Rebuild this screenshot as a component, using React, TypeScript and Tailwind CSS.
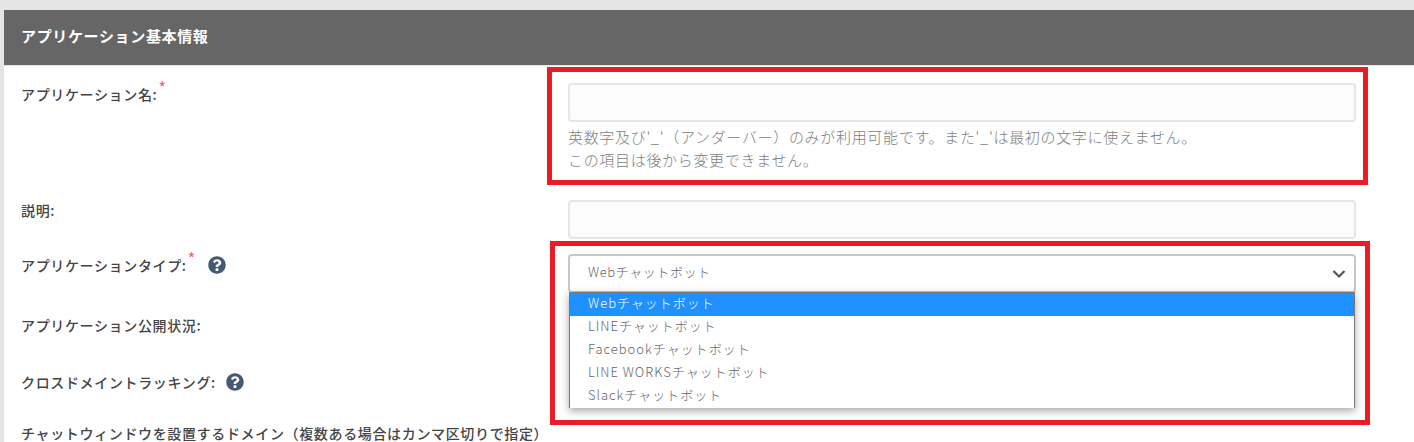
import React from "react";

const font = { fontFamily: '"Noto Sans CJK JP", "Noto Sans", sans-serif' };

function Help() {
  return (
    <svg viewBox="0 0 512 512" className="w-[18px] h-[18px] shrink-0" fill="#455a70">
      <path d="M504 256c0 137-111 248-248 248S8 393 8 256 119 8 256 8s248 111 248 248zM262.650 90c-54.497 0-89.255 22.957-116.549 63.758-3.536 5.286-2.353 12.415 2.715 16.258l34.699 26.310c5.205 3.947 12.621 3.008 16.665-2.122 17.864-22.658 30.113-35.797 57.303-35.797 20.429 0 45.698 13.148 45.698 32.958 0 14.976-12.363 22.667-32.534 33.976C247.128 238.528 216 254.941 216 296v4c0 6.627 5.373 12 12 12h56c6.627 0 12-5.373 12-12v-1.333c0-28.462 83.186-29.647 83.186-106.667 0-58.002-60.165-102-116.536-102zM256 338c-25.365 0-46 20.635-46 46 0 25.364 20.635 46 46 46s46-20.636 46-46c0-25.365-20.635-46-46-46z" />
    </svg>
  );
}

function Label({ children, star, className = "" }: { children: React.ReactNode; star?: boolean; className?: string }) {
  return (
    <div className={`flex items-start text-[14px] leading-5 font-medium text-[#444] tracking-[0.65px] ${className}`}>
      <span>{children}</span>
      {star && <span className="text-[#e8606a] text-[16px] leading-3 -mt-[3px] ml-[1px] font-normal">*</span>}
    </div>
  );
}

const items = ["Webチャットボット", "LINEチャットボット", "Facebookチャットボット", "LINE WORKSチャットボット", "Slackチャットボット"];

export default function App() {
  return (
    <div style={font} className="relative w-[1414px] h-[442px] overflow-hidden bg-white">
      <div className="h-[10px] bg-[#e5e5e5]" />
      <div className="flex h-[432px]">
        <div className="w-[4px] bg-[#e5e5e5]" />
        <div className="flex-1 min-w-0">
          <div className="h-[55px] bg-[#666666] flex items-center pb-[3px] pl-[17px] text-[15px] font-bold text-white tracking-[0.65px]">
            アプリケーション基本情報
          </div>
          <div className="h-[1px] bg-[#e5e5e5]" />
          <div className="pl-[17px] pr-[58px] pt-[17px]">
            <div className="grid grid-cols-[547px_1fr]">
              <Label star className="pt-[1px]">アプリケーション名:</Label>
              <div>
                <div className="h-[39px] rounded-[4px] border-2 border-[#e6e6e6] bg-[#fcfcfc]" />
                <div className="mt-[3px] text-[15px] leading-[23px] font-light text-[#808080] tracking-[0.68px]">
                  <div>英数字及び'_'（アンダーバー）のみが利用可能です。また'_'は最初の文字に使えません。</div>
                  <div>この項目は後から変更できません。</div>
                </div>
              </div>
            </div>
            <div className="grid grid-cols-[547px_1fr] mt-[29px]">
              <Label>説明:</Label>
              <div className="h-[39px] rounded-[4px] border-2 border-[#e6e6e6] bg-[#fcfcfc]" />
            </div>
            <div className="grid grid-cols-[547px_1fr] mt-[15px]">
              <div className="flex items-start pt-[1px]">
                <Label star>アプリケーションタイプ:</Label>
                <span className="ml-[12px] mt-[1px]"><Help /></span>
              </div>
              <div className="h-[39px] rounded-[4px] border-2 border-[#c8c8c8] bg-white flex items-center justify-between pl-[18px] pr-[8px] pb-[3px] text-[13px] font-light text-[#666] tracking-[0.6px]">
                <span>Webチャットボット</span>
                <svg viewBox="0 0 14 10" className="w-[14px] h-[10px] mt-[3px]" fill="none" stroke="#555" strokeWidth="2.2"><path d="M1.500 2l5.500 5.500L12.500 2" /></svg>
              </div>
            </div>
            <Label className="mt-[22px]">アプリケーション公開状況:</Label>
            <div className="flex items-center mt-[37px]">
              <Label>クロスドメイントラッキング:</Label>
              <span className="ml-[10px]"><Help /></span>
            </div>
            <Label className="mt-[31px] whitespace-nowrap">チャットウィンドウを設置するドメイン（複数ある場合はカンマ区切りで指定）</Label>
          </div>
        </div>
      </div>

      {/* dropdown overlay */}
      <div className="absolute left-[569px] top-[292px] w-[786px] h-[116px] bg-white border-t border-l border-r border-[#767676] shadow-[0_3px_8px_rgba(0,0,0,0.35)] text-[13px] font-light text-[#666] tracking-[1px]">
        {items.map((t, i) => (
          <div key={t} className={`h-[23px] flex items-center pl-[18px] pb-[3px] ${i === 0 ? "bg-[#1e90ff] text-white" : ""}`}>{t}</div>
        ))}
      </div>

      {/* red annotation boxes */}
      <div className="absolute left-[547px] top-[67px] w-[821px] h-[118px] border-[5px] border-[#ed1c24]" />
      <div className="absolute left-[550px] top-[241px] w-[820px] h-[184px] border-[5px] border-[#ed1c24]" />
    </div>
  );
}
